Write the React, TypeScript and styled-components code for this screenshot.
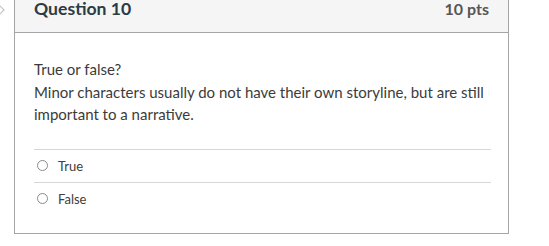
import React, { useState } from 'react';
import styled, { createGlobalStyle } from 'styled-components';

const GlobalStyle = createGlobalStyle`
  html, body {
    margin: 0;
    padding: 0;
    background: #ffffff;
    overflow: hidden;
  }
  body {
    font-family: Lato, "Liberation Sans", sans-serif;
    color: #2d3b45;
  }
`;

const Page = styled.div`
  display: flex;
  align-items: flex-start;
  width: 549px;
  height: 246px;
`;

const Gutter = styled.div`
  display: flex;
  width: 14px;
  flex-shrink: 0;
  padding-top: 4px;

  & > svg {
    width: 7px;
    height: 12px;
    margin-left: -2px;
  }
`;

const Card = styled.div`
  width: 493px;
  margin-top: -16px;
  border: 1px solid #a5a5a5;
  background: #ffffff;
`;

const Header = styled.div`
  display: flex;
  align-items: center;
  justify-content: space-between;
  height: 47px;
  padding: 0 19px 0 19px;
  background: #f5f5f5;
  border-bottom: 1px solid #a5a5a5;
`;

const Title = styled.div`
  font-size: 17.6px;
  font-weight: 700;
  color: #2d3b45;
`;

const Points = styled.div`
  font-size: 16px;
  font-weight: 700;
  color: #565656;
`;

const Body = styled.div`
  padding: 25px 17px 18px 19px;
`;

const Prompt = styled.div`
  font-size: 15px;
  line-height: 22.5px;
  color: #3b3b3b;
  margin-bottom: 23px;
`;

const Answers = styled.div`
  display: flex;
  flex-direction: column;
`;

const Answer = styled.label`
  display: flex;
  align-items: center;
  height: 32px;
  padding-left: 3px;
  border-top: 1px solid #d7d7d7;
  font-size: 13px;
  color: #404040;
  cursor: pointer;
`;

const Radio = styled.span<{ checked: boolean }>`
  box-sizing: border-box;
  width: 11px;
  height: 11px;
  margin-right: 10px;
  border-radius: 50%;
  border: 1px solid #8a8a8a;
  background: ${props => (props.checked ? 'radial-gradient(circle, #2d3b45 0 2.5px, #fff 3px)' : '#ffffff')};
`;

const answers = ['True', 'False'];

const App = () => {
  const [selected, setSelected] = useState<string | null>(null);

  return (
    <>
      <GlobalStyle />
      <Page>
        <Gutter>
          <svg viewBox='0 0 7 12' fill='none'>
            <path d='M1 1 L6 6 L1 11' stroke='#c4c4c4' strokeWidth='1.2' />
          </svg>
        </Gutter>
        <Card>
          <Header>
            <Title>Question 10</Title>
            <Points>10 pts</Points>
          </Header>
          <Body>
            <Prompt>
              True or false?
              <br />
              Minor characters usually do not have their own storyline, but are still important to a narrative.
            </Prompt>
            <Answers>
              {answers.map(answer => (
                <Answer key={answer} onClick={() => setSelected(answer)}>
                  <Radio checked={selected === answer} />
                  {answer}
                </Answer>
              ))}
            </Answers>
          </Body>
        </Card>
      </Page>
    </>
  );
};

export default App;
